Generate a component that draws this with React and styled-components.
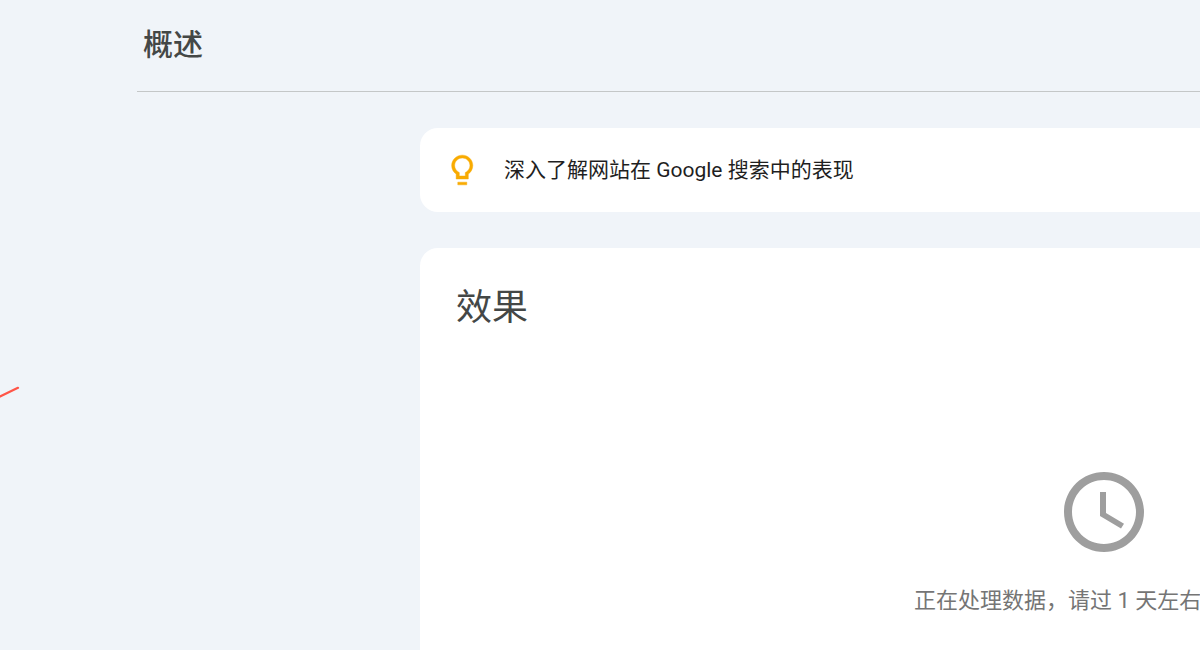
import React from "react";
import styled, { createGlobalStyle } from "styled-components";

const GlobalStyle = createGlobalStyle`
  *, *::before, *::after { box-sizing: border-box; }
  body {
    margin: 0;
    background: #f0f4f9;
    font-family: Roboto, "Noto Sans CJK SC", sans-serif;
  }
`;

const Page = styled.div`
  position: relative;
  display: flex;
  flex-direction: column;
  min-height: 100vh;
  overflow: hidden;
`;

const Header = styled.header`
  margin-left: 137px;
  padding: 25px 6px 26px;
  border-bottom: 1px solid #c4c7c8;
`;

const PageTitle = styled.h1`
  margin: 0;
  font-size: 30px;
  line-height: 40px;
  font-weight: 500;
  color: #444746;
`;

const Content = styled.main`
  flex: 1;
  display: flex;
  flex-direction: column;
  gap: 36px;
  padding: 36px 0 0 420px;
`;

const TipCard = styled.section`
  display: flex;
  align-items: center;
  gap: 24px;
  padding: 24px;
  background: #fff;
  border-radius: 18px 0 0 18px;
`;

const TipText = styled.p`
  margin: 0;
  font-size: 21px;
  line-height: 36px;
  color: #1f1f1f;
  white-space: nowrap;
`;

const ReportCard = styled.section`
  flex: 1;
  display: flex;
  flex-direction: column;
  padding: 36px 0 32px 36px;
  background: #fff;
  border-radius: 18px 0 0 0;
`;

const ReportTitle = styled.h2`
  margin: 0;
  font-size: 36px;
  line-height: 48px;
  font-weight: 400;
  color: #444746;
`;

const Status = styled.div`
  display: flex;
  flex-direction: column;
  align-self: flex-end;
  align-items: center;
  gap: 24px;
  width: 286px;
  padding-top: 132px;
`;

const StatusIcon = styled.svg`
  margin-left: 94px;
`;

const StatusText = styled.p`
  align-self: flex-start;
  margin: 0;
  font-size: 22px;
  line-height: 34px;
  color: #757575;
  white-space: nowrap;
`;

const Stroke = styled.svg`
  position: absolute;
  top: 384px;
  left: 0;
`;

export default function App() {
  return (
    <>
      <GlobalStyle />
      <Page>
        <Header>
          <PageTitle>概述</PageTitle>
        </Header>
        <Content>
          <TipCard>
            <svg width="36" height="36" viewBox="0 0 24 24" fill="#f9ab00" aria-hidden="true">
              <path
                d="M9.2 20.1h6v1.8h-6zM12.2 2.1C8.3 2.1 5.1 5.2 5.1 9c0 2.4 1.2 4.4 3 5.7V18h8.1v-3.3c1.8-1.3 3-3.3 3-5.7 0-3.8-3.1-6.9-7-6.9zm2.9 11l-.9.6V16h-4v-2.3l-.9-.6C7.9 12.2 7.1 10.6 7.1 9c0-2.8 2.3-5 5.1-5s5.1 2.2 5.1 5c0 1.6-.8 3.2-2.2 4.1z"
                stroke="#f9ab00"
                strokeWidth=".3"
              />
            </svg>
            <TipText>深入了解网站在 Google 搜索中的表现</TipText>
          </TipCard>
          <ReportCard>
            <ReportTitle>效果</ReportTitle>
            <Status>
              <StatusIcon width="96" height="96" viewBox="0 0 24 24" fill="#9e9e9e" aria-hidden="true">
                <path d="M11.99 2C6.47 2 2 6.48 2 12s4.47 10 9.99 10C17.52 22 22 17.52 22 12S17.52 2 11.99 2zM12 20c-4.42 0-8-3.58-8-8s3.58-8 8-8 8 3.58 8 8-3.58 8-8 8z" />
                <path d="M12.5 7H11v6l5.25 3.15.75-1.23-4.5-2.67z" />
              </StatusIcon>
              <StatusText>正在处理数据，请过 1 天左右</StatusText>
            </Status>
          </ReportCard>
        </Content>
        <Stroke width="24" height="16" viewBox="0 0 24 16" fill="none" aria-hidden="true">
          <path d="M-2 13.5L18 3.8" stroke="#ff5548" strokeWidth="2.2" strokeLinecap="round" />
        </Stroke>
      </Page>
    </>
  );
}
